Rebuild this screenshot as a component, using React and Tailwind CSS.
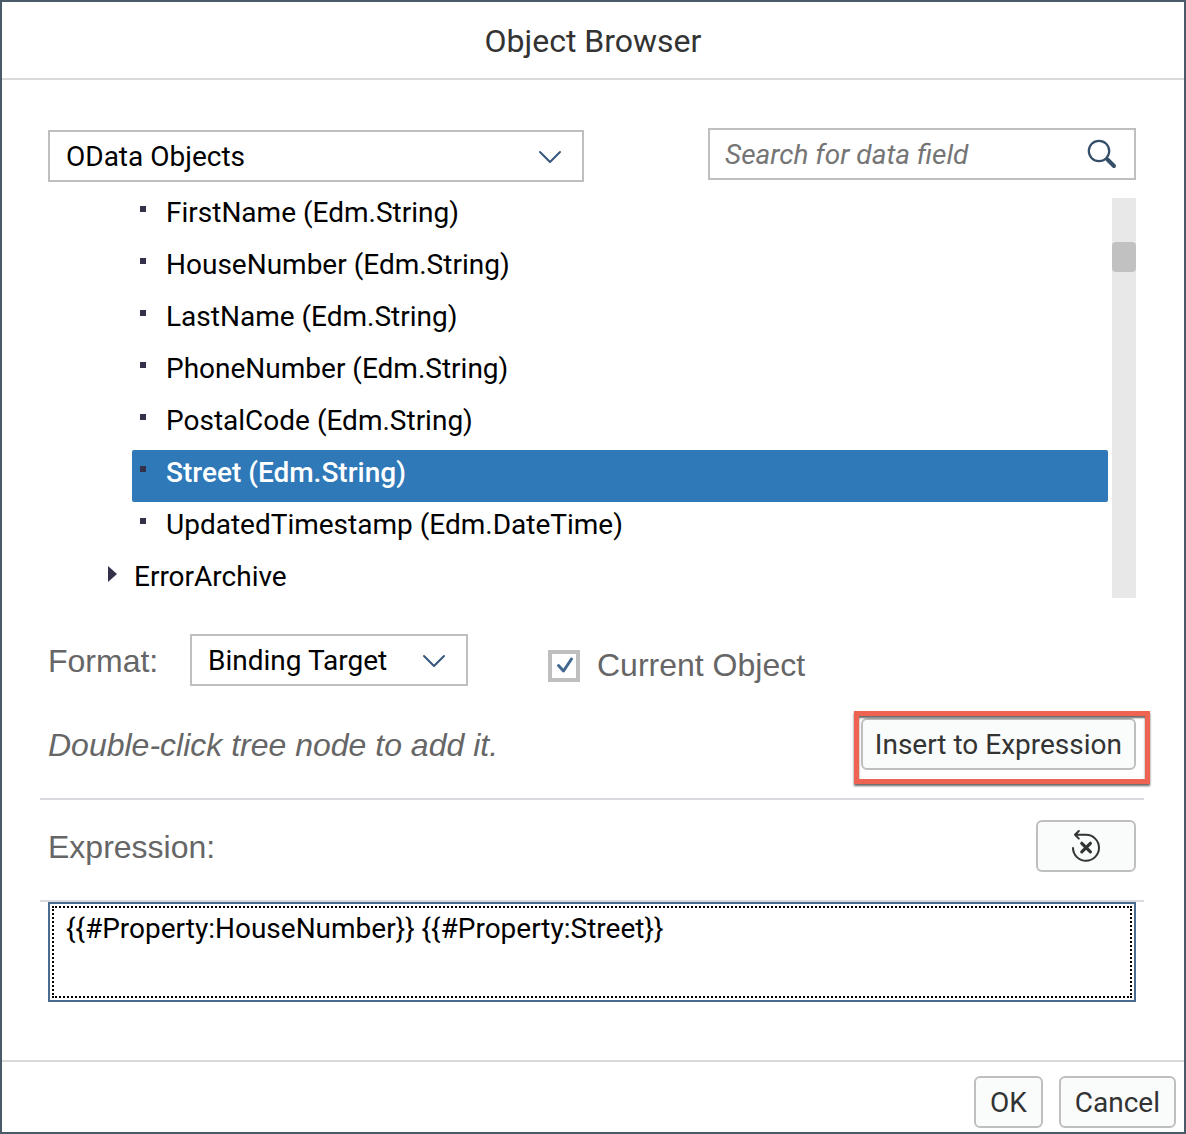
import { useState } from "react";

const fields = [
  "FirstName (Edm.String)",
  "HouseNumber (Edm.String)",
  "LastName (Edm.String)",
  "PhoneNumber (Edm.String)",
  "PostalCode (Edm.String)",
  "Street (Edm.String)",
  "UpdatedTimestamp (Edm.DateTime)",
];

const uiFont = "font-['Roboto',sans-serif] text-[28px] leading-8";
const labelFont = "font-['Liberation_Sans',Arial,sans-serif] text-[32px] leading-9 text-[#666]";
const buttonStyle = "h-[52px] rounded-md border-2 border-[#bfbfbf] bg-[#fafbfb] text-[#333]";

function Select({ label, options, id, className }) {
  return (
    <div className={`relative ${className}`}>
      <select
        id={id}
        aria-label={label}
        className={`h-[52px] w-full appearance-none border-2 border-[#bfbfbf] bg-white pt-[2px] pr-14 pl-4 text-black outline-none ${uiFont}`}
      >
        {options.map((o) => (
          <option key={o}>{o}</option>
        ))}
      </select>
      <svg
        className="pointer-events-none absolute top-5 right-[22px] h-[14px] w-6"
        viewBox="0 0 24 14"
        fill="none"
        stroke="#35587a"
        strokeWidth="2"
        strokeLinecap="round"
        strokeLinejoin="round"
      >
        <path d="M2 2l10 10L22 2" />
      </svg>
    </div>
  );
}

function ResetIcon() {
  return (
    <svg className="h-8 w-8" viewBox="0 0 32 32" fill="none" stroke="#333" strokeLinecap="round" strokeLinejoin="round">
      <path strokeWidth="2" d="M3 18A13 13 0 1 0 16 4.800H5M8.800 1L5 4.800l3.800 3.800" />
      <path strokeWidth="3.2" d="M11.800 13.300l8.600 8.600M20.400 13.300l-8.600 8.600" />
    </svg>
  );
}

export default function App() {
  const [selected, setSelected] = useState("Street (Edm.String)");
  const [current, setCurrent] = useState(true);
  const [expression, setExpression] = useState("{{#Property:HouseNumber}} {{#Property:Street}}");

  return (
    <div className={`flex min-h-screen flex-col border-2 border-[#4b5a69] bg-white text-black ${uiFont}`}>
      <header className="flex h-[78px] items-center justify-center border-b-2 border-[#d9d9d9] pt-[2px]">
        <h1 className="text-[32px] leading-9 text-[#333]">Object Browser</h1>
      </header>

      <main className="flex flex-1 flex-col pt-12 pr-12 pl-[46px]">
        <div className="flex h-[54px] justify-between gap-6">
          <Select label="Object source" options={["OData Objects"]} className="w-[536px] self-end" />
          <div className="flex h-[52px] w-[428px] items-center border-2 border-[#bfbfbf] pr-4 pl-[15px]">
            <input
              type="text"
              aria-label="Search for data field"
              placeholder="Search for data field"
              className="min-w-0 flex-1 pt-[2px] italic outline-none placeholder:text-[#757575]"
            />
            <button type="button" aria-label="Search">
              <svg className="h-8 w-8" viewBox="0 0 32 32" fill="none" stroke="#354f69" strokeLinecap="round">
                <circle cx="13" cy="13" r="10.2" strokeWidth="2.2" />
                <path strokeWidth="4" d="M21.5 21.5l6.500 6.500" />
              </svg>
            </button>
          </div>
        </div>

        <div className="mt-4 flex h-[400px] gap-1">
          <ul role="tree" className="-mt-2 flex-1">
            {fields.map((f) => (
              <li
                key={f}
                role="treeitem"
                aria-selected={f === selected}
                onClick={() => setSelected(f)}
                className={`ml-[84px] flex h-[52px] cursor-default items-start rounded-xs pt-[7px] pl-2 ${
                  f === selected ? "bg-[#2f79b9] font-medium text-white" : ""
                }`}
              >
                <span className="mt-[9px] mr-5 h-[6px] w-[6px] bg-[#33304a]" />
                {f}
              </li>
            ))}
            <li role="treeitem" aria-expanded="false" className="ml-[60px] flex h-[52px] items-start pt-[7px]">
              <svg className="mt-[5px] mr-[17px] h-4 w-[9px]" viewBox="0 0 9 16" fill="#33304a">
                <path d="M0 0l9 8-9 8z" />
              </svg>
              ErrorArchive
            </li>
          </ul>
          <div className="w-6 bg-[#e8e8e8] pt-11">
            <div className="h-[30px] rounded bg-[#c1c1c1]" />
          </div>
        </div>

        <div className="mt-9 flex h-[52px] items-center">
          <label htmlFor="format" className={`w-[142px] pt-[2px] ${labelFont}`}>
            Format:
          </label>
          <Select id="format" label="Format" options={["Binding Target"]} className="w-[278px]" />
          <label className={`ml-20 flex items-center gap-[17px] pt-3 ${labelFont}`}>
            <span className="relative flex h-8 w-8">
              <input
                type="checkbox"
                checked={current}
                onChange={(e) => setCurrent(e.target.checked)}
                className="h-8 w-8 appearance-none border-4 border-[#bfbfbf] bg-white"
              />
              {current && (
                <svg
                  className="pointer-events-none absolute inset-0 h-8 w-8"
                  viewBox="0 0 32 32"
                  fill="none"
                  stroke="#42688f"
                  strokeWidth="3"
                  strokeLinecap="round"
                  strokeLinejoin="round"
                >
                  <path d="M10.500 15.500l5 5.500L23.500 9" />
                </svg>
              )}
            </span>
            <span className="pb-[2px]">Current Object</span>
          </label>
        </div>

        <div className="-mx-2 mt-8 flex h-[82px] items-start justify-between border-b-2 border-[#d9d9e0] px-2">
          <p className={`pt-[9px] italic ${labelFont}`}>Double-click tree node to add it.</p>
          <div className="relative">
            <button type="button" className={`px-3 pt-[2px] ${buttonStyle}`}>
              Insert to Expression
            </button>
            <div className="pointer-events-none absolute -top-[7px] -right-[14px] -bottom-[14px] -left-[7px] border-5 border-[#ee6352] shadow-[0_2px_2px_#0009,inset_0_2px_2px_#0009]" />
          </div>
        </div>

        <div className="-mx-2 flex h-[102px] items-start justify-between border-b-2 border-[#d9d9e0] px-2 pt-5">
          <label htmlFor="expression" className={`pt-[9px] ${labelFont}`}>
            Expression:
          </label>
          <button type="button" aria-label="Reset expression" className={`flex w-[100px] items-center justify-center ${buttonStyle}`}>
            <ResetIcon />
          </button>
        </div>

        <textarea
          id="expression"
          value={expression}
          onChange={(e) => setExpression(e.target.value)}
          className="block h-[100px] w-full resize-none border-2 border-[#496b8d] px-4 pt-[9px] outline-2 -outline-offset-6 outline-black outline-dotted"
        />
      </main>

      <footer className="flex h-[72px] items-center justify-end gap-4 border-t-2 border-[#d9d9d9] px-2 pt-[10px]">
        <button type="button" className={`px-[14px] pt-[2px] ${buttonStyle}`}>
          OK
        </button>
        <button type="button" className={`px-[14px] pt-[2px] ${buttonStyle}`}>
          Cancel
        </button>
      </footer>
    </div>
  );
}
